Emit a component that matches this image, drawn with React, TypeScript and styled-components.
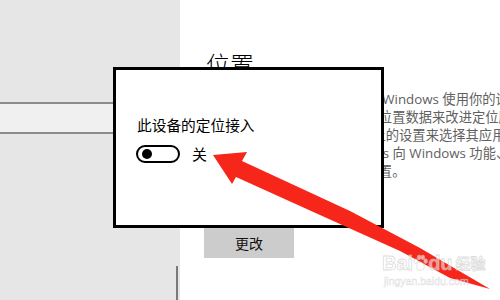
import React from "react";
import styled, { createGlobalStyle } from "styled-components";

const Global = createGlobalStyle`
  html, body { margin: 0; padding: 0; background: #ffffff; overflow: hidden; }
  * { box-sizing: border-box; }
`;

const Screen = styled.div`
  position: relative;
  width: 500px;
  height: 300px;
  overflow: hidden;
  display: grid;
  grid-template-columns: 180px 1fr;
  font-family: "Noto Sans CJK SC", "Noto Sans", sans-serif;
`;

const Sidebar = styled.div`
  background: #e6e6e6;
  display: flex;
  flex-direction: column;
  padding-top: 102px;
`;

const NavBand = styled.div`
  height: 32px;
  background: #f0f0f0;
  border-top: 2px solid #8c8c8c;
  border-bottom: 2px solid #8c8c8c;
`;

const ScrollThumb = styled.div`
  margin-top: auto;
  align-self: flex-end;
  margin-right: 2px;
  width: 2px;
  height: 34px;
  background: #7a7a7a;
`;

const Content = styled.div`
  grid-column: 2;
  padding: 52px 0 0 26px;
  display: flex;
  flex-direction: column;
  align-items: flex-start;
  min-width: 0;
  overflow: hidden;
`;

const Heading = styled.h1`
  margin: 0;
  font-size: 24px;
  line-height: 24px;
  font-weight: 300;
  color: #000;
  white-space: nowrap;
`;

const Paragraph = styled.div`
  margin-top: 14px;
  font-family: "Open Sans", "Noto Sans CJK SC", sans-serif;
  font-size: 13.3px;
  line-height: 18px;
  color: #616161;
`;

const Line = styled.div`
  white-space: pre;
`;

const ChangeButton = styled.button`
  margin-top: 47px;
  margin-left: -2px;
  width: 90px;
  height: 31px;
  border: none;
  background: #cccccc;
  font-family: "Noto Sans CJK SC", sans-serif;
  font-size: 14px;
  color: #111;
  padding: 0;
`;

const Dialog = styled.div`
  position: absolute;
  left: 113px;
  top: 67px;
  width: 271px;
  height: 161px;
  border: 3px solid #000;
  background: #fff;
  padding: 45px 0 0 21px;
  display: flex;
  flex-direction: column;
`;

const DialogTitle = styled.div`
  font-size: 14.7px;
  line-height: 20px;
  color: #000;
  white-space: nowrap;
`;

const ToggleRow = styled.div`
  margin-top: 10px;
  margin-left: -1px;
  display: flex;
  align-items: center;
  gap: 12px;
`;

const Toggle = styled.div<{ $on: boolean }>`
  width: 44px;
  height: 18px;
  border: 2px solid #000;
  border-radius: 9px;
  display: flex;
  align-items: center;
  justify-content: ${(p) => (p.$on ? "flex-end" : "flex-start")};
  padding: 0 4px;
`;

const Knob = styled.div`
  width: 10px;
  height: 10px;
  border-radius: 50%;
  background: #000;
`;

const ToggleLabel = styled.span`
  font-size: 15px;
  line-height: 18px;
  color: #000;
`;

const ArrowLayer = styled.svg`
  position: absolute;
  left: 0;
  top: 0;
  width: 500px;
  height: 300px;
  pointer-events: none;
`;

const Watermark = styled.div`
  position: absolute;
  left: 382px;
  top: 251px;
  display: flex;
  flex-direction: column;
  pointer-events: none;
  color: rgba(255, 255, 255, 0.55);
  -webkit-text-stroke: 0.8px rgba(190, 190, 190, 0.55);
`;

const WatermarkLogo = styled.div`
  display: flex;
  align-items: center;
  font-family: "Liberation Sans", sans-serif;
  font-weight: 700;
  font-size: 20px;
  line-height: 24px;
`;

const WatermarkCn = styled.span`
  font-family: "Noto Sans CJK SC", sans-serif;
  font-size: 15px;
  margin-left: 3px;
`;

const WatermarkUrl = styled.div`
  font-family: "Liberation Sans", sans-serif;
  font-size: 10.5px;
  line-height: 12px;
  margin-left: 2px;
  -webkit-text-stroke: 0.5px rgba(190, 190, 190, 0.5);
`;

const Paw = () => (
  <svg width="15" height="18" viewBox="0 0 16 18">
    <g fill="rgba(255,255,255,0.6)" stroke="rgba(190,190,190,0.6)" strokeWidth="0.8">
      <ellipse cx="3" cy="7" rx="2" ry="2.5" />
      <ellipse cx="6.5" cy="3" rx="2" ry="2.5" />
      <ellipse cx="10.5" cy="3" rx="2" ry="2.5" />
      <ellipse cx="13.5" cy="7" rx="2" ry="2.5" />
      <path d="M8 8 C4 8 3 14 5 16 C7 17 9 17 11 16 C13 14 12 8 8 8 Z" />
    </g>
  </svg>
);

export default function App() {
  return (
    <>
      <Global />
      <Screen>
        <Sidebar>
          <NavBand />
          <ScrollThumb />
        </Sidebar>
        <Content>
          <Heading>位置</Heading>
          <Paragraph>
            <Line>如果允许访问设备的位置，则 Windows 使用你的设备的功能</Line>
            <Line>确定你的位置，微软使用你的位置数据来改进定位服务。</Line>
            <Line>启用后，  用户可通过此页面上的设置来选择其应用是否可访问位置。</Line>
            <Line>拒绝位置访问会阻止  Windows 向 Windows 功能、应用和服务</Line>
            <Line>提供位置，应用将无法获取位置。</Line>
          </Paragraph>
          <ChangeButton>更改</ChangeButton>
        </Content>

        <Dialog>
          <DialogTitle>此设备的定位接入</DialogTitle>
          <ToggleRow>
            <Toggle $on={false}>
              <Knob />
            </Toggle>
            <ToggleLabel>关</ToggleLabel>
          </ToggleRow>
        </Dialog>

        <ArrowLayer viewBox="0 0 500 300">
          <polygon
            fill="#f7261b"
            points="213,155 247,152 242,161 350,211 420,248 490,289 450,278 400,251 320,215 236,177 232,184"
          />
        </ArrowLayer>

        <Watermark>
          <WatermarkLogo>
            Bai
            <Paw />
            du
            <WatermarkCn>经验</WatermarkCn>
          </WatermarkLogo>
          <WatermarkUrl>jingyan.baidu.com</WatermarkUrl>
        </Watermark>
      </Screen>
    </>
  );
}
